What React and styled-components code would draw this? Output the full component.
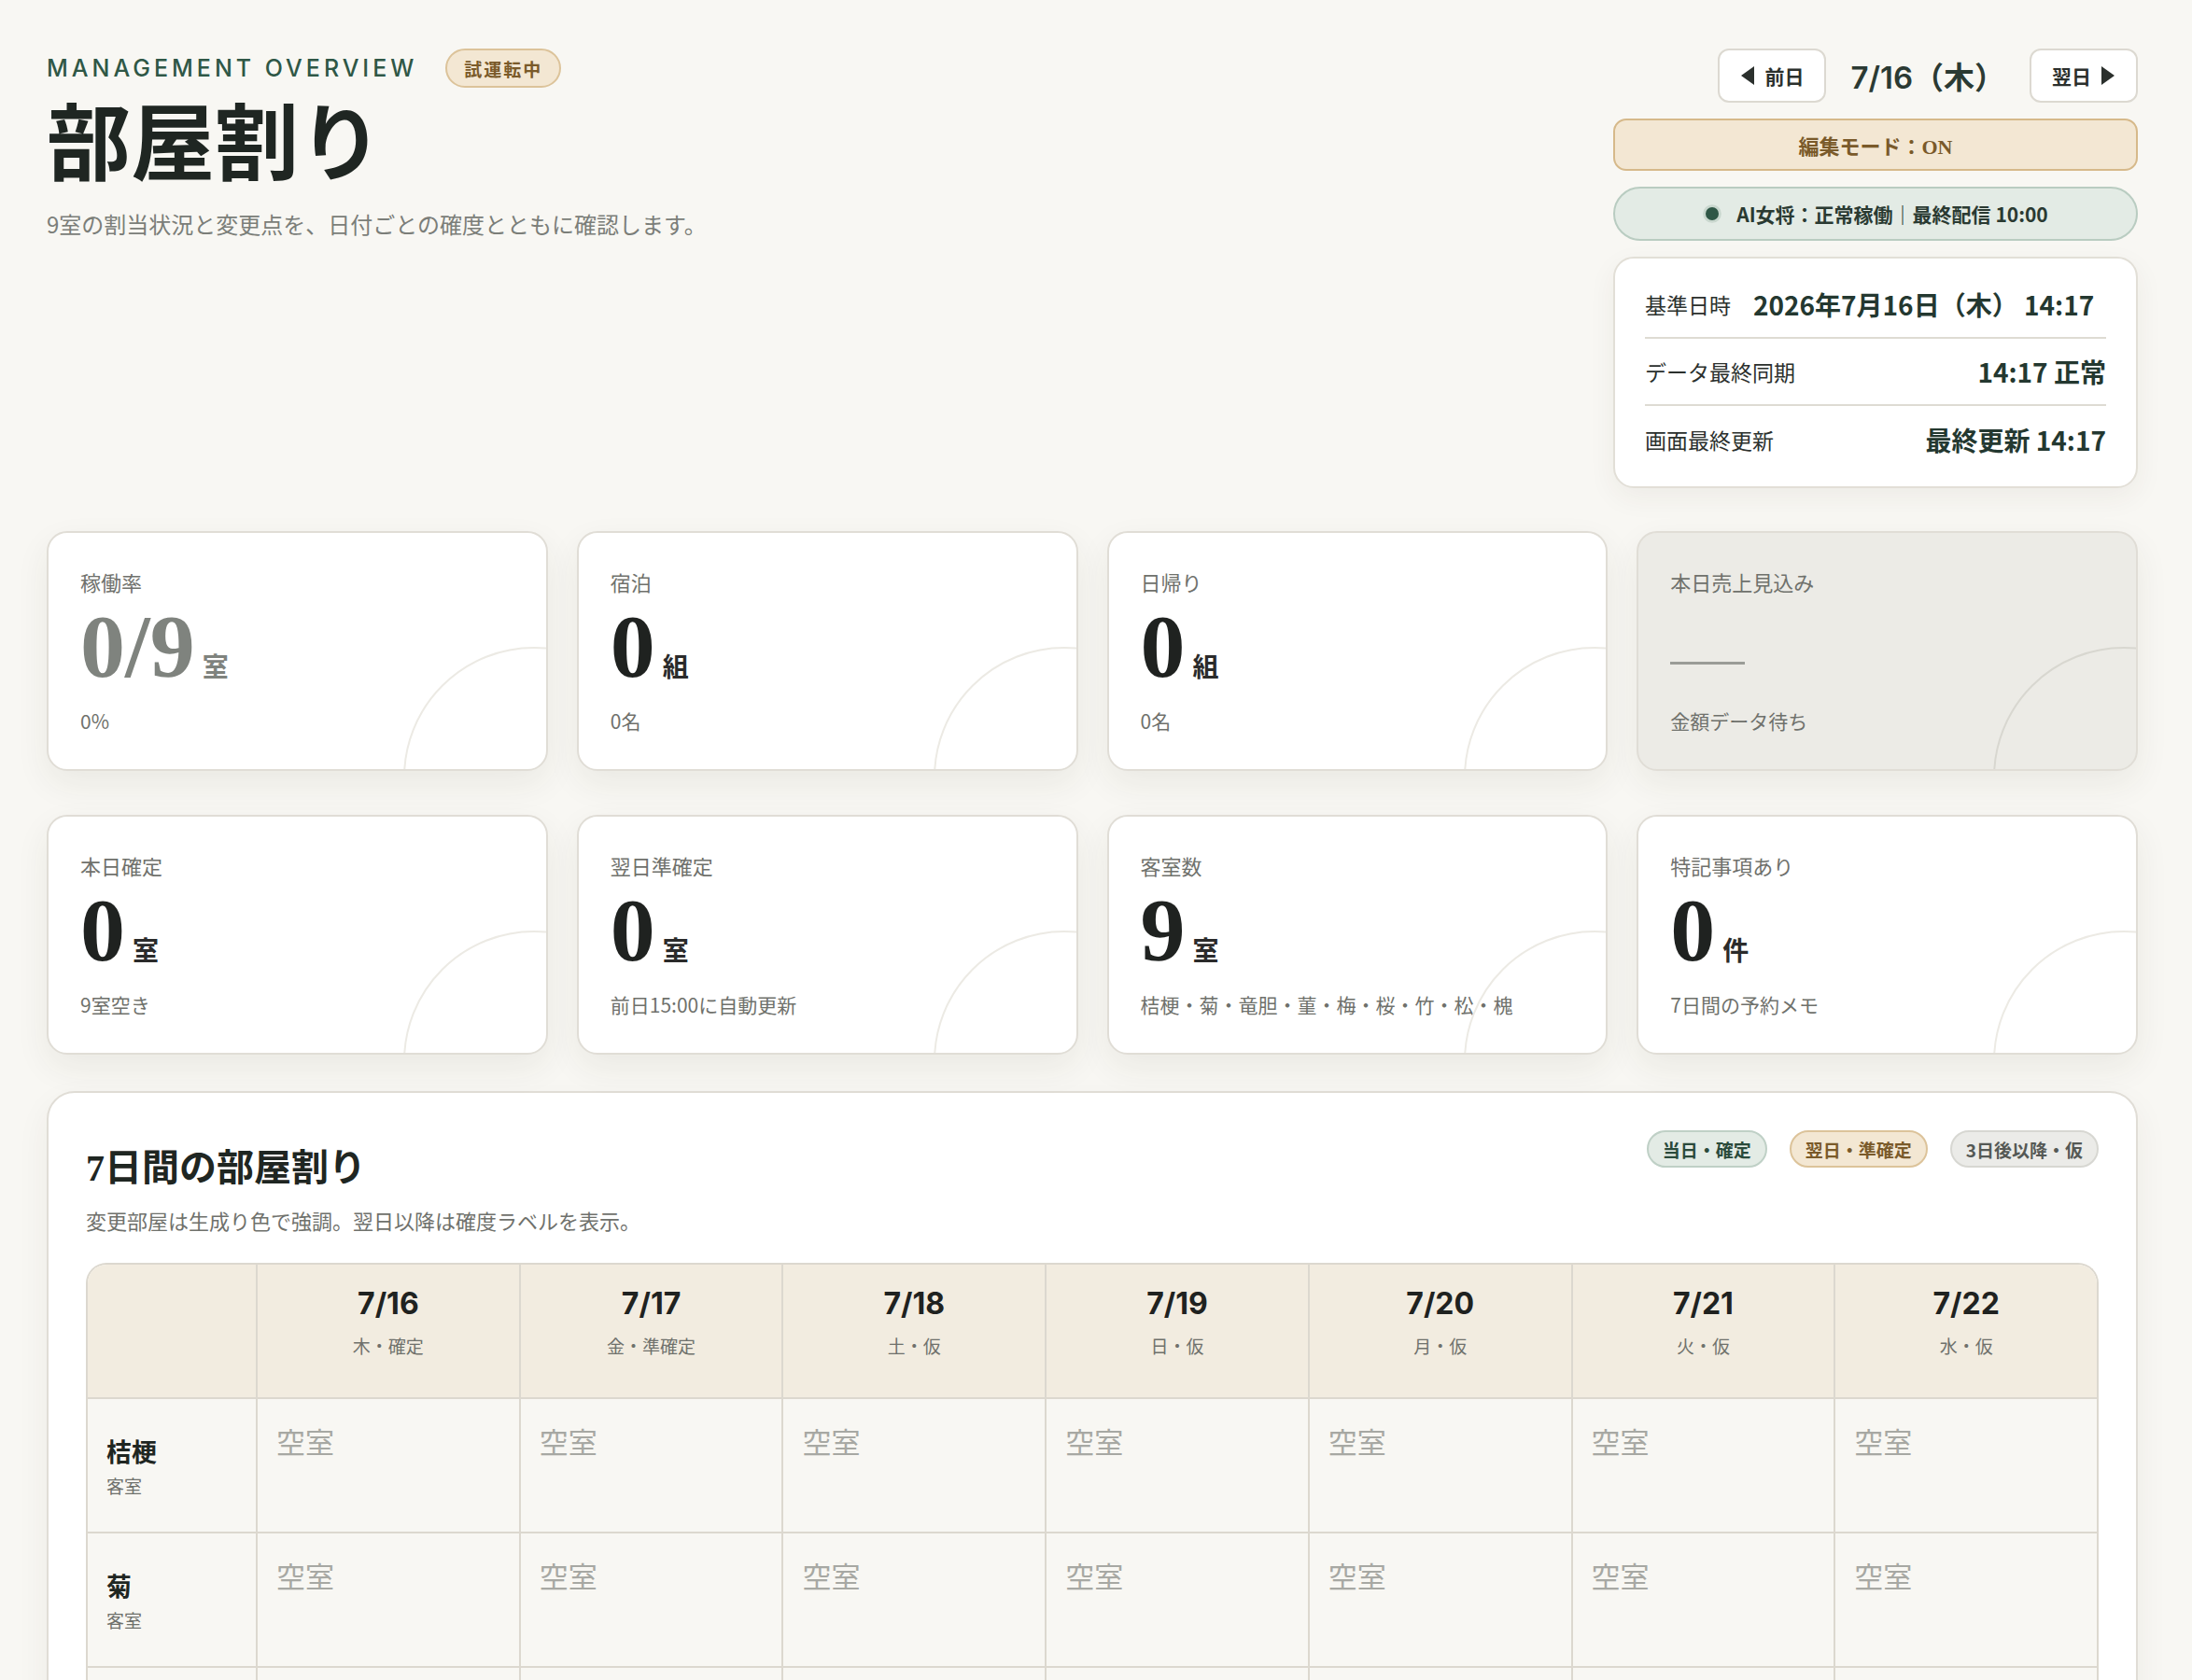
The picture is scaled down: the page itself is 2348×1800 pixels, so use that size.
import React from "react";
import styled, { createGlobalStyle } from "styled-components";

const Global = createGlobalStyle`
  html, body { margin: 0; padding: 0; background: #f8f7f3; }
  body { font-family: "Noto Sans CJK JP", "Noto Sans", sans-serif; color: #1f2622; }
  * { box-sizing: border-box; }
`;

const SERIF = `"Liberation Serif", "Noto Sans CJK JP", serif`;

const Page = styled.div`
  padding: 52px 58px 40px 50px;
  display: flex;
  flex-direction: column;
  gap: 39px;
`;
const Header = styled.header`
  display: flex;
  justify-content: space-between;
  align-items: flex-start;
  margin-bottom: 7px;
`;
const HeadLeft = styled.div`
  display: flex;
  flex-direction: column;
  padding-top: 0;
`;
const EyebrowRow = styled.div`
  display: flex;
  align-items: center;
  gap: 30px;
`;
const Eyebrow = styled.div`
  font-family: "Inter", "Noto Sans", sans-serif;
  font-size: 25px;
  letter-spacing: 4px;
  font-weight: 500;
  color: #2f5746;
`;
const Pill = styled.span`
  display: inline-flex;
  align-items: center;
  height: ${p => p.$h || 42}px;
  padding: 0 ${p => p.$px || 18}px;
  border-radius: 999px;
  font-size: ${p => p.$fs || 19}px;
  font-weight: 700;
  letter-spacing: ${p => p.$ls || 0}px;
  background: ${p => p.$bg};
  color: ${p => p.$fg};
  border: 2px solid ${p => p.$bd};
`;
const Title = styled.h1`
  margin: 10px 0 0 0;
  font-family: ${SERIF};
  font-size: 90px;
  font-weight: 700;
  line-height: 1.15;
  color: #1f2622;
`;
const Sub = styled.p`
  margin: 14px 0 0 0;
  font-size: 24px;
  color: #7b7e79;
`;
const HeadRight = styled.div`
  width: 562px;
  display: flex;
  flex-direction: column;
  gap: 17px;
`;
const DateNav = styled.div`
  display: flex;
  justify-content: flex-end;
  align-items: center;
  gap: 20px;
`;
const NavBtn = styled.button`
  height: 58px;
  width: 116px;
  padding: 0 18px;
  display: inline-flex;
  align-items: center;
  justify-content: center;
  gap: 10px;
  background: #fff;
  border: 2px solid #dcd9d1;
  border-radius: 12px;
  font-family: inherit;
  font-size: 21px;
  font-weight: 700;
  color: #2b302d;
`;
const DateText = styled.div`
  font-family: "Inter", "Noto Sans CJK JP", sans-serif;
  font-size: 33px;
  font-weight: 600;
  color: #2b3a33;
  padding: 0 6px;
`;
const ModeBar = styled.div`
  height: 56px;
  border-radius: 14px;
  background: #f3e7d3;
  border: 2px solid #d6b98a;
  display: flex;
  align-items: center;
  justify-content: center;
  font-family: ${SERIF};
  font-weight: 700;
  font-size: 22px;
  color: #7a5a2a;
`;
const AiBar = styled.div`
  height: 58px;
  border-radius: 999px;
  background: #e3ebe5;
  border: 2px solid #b9ccc1;
  display: flex;
  align-items: center;
  justify-content: center;
  gap: 10px;
  font-size: 21px;
  font-weight: 700;
  color: #2a3a32;
`;
const Dot = styled.span`
  width: 20px; height: 20px; border-radius: 50%;
  background: #2f5746;
  box-shadow: 0 0 0 4px #c9d7ce;
  margin-right: 6px;
  transform: scale(0.7);
`;
const InfoCard = styled.div`
  background: #fff;
  border: 2px solid #e2dfd7;
  border-radius: 22px;
  padding: 14px 32px;
  box-shadow: 0 10px 30px rgba(60,50,30,0.06);
`;
const InfoRow = styled.div`
  display: flex;
  justify-content: ${p => p.$between ? "space-between" : "flex-start"};
  align-items: center;
  gap: 24px;
  height: 72px;
  border-bottom: ${p => p.$last ? "none" : "2px solid #dedbd3"};
`;
const InfoLabel = styled.span`
  font-size: 23px;
  color: #2b302d;
`;
const InfoValue = styled.span`
  font-size: 28px;
  font-weight: 700;
  color: #243830;
`;

const KpiGrid = styled.div`
  display: grid;
  grid-template-columns: repeat(4, 1fr);
  gap: 47px 31px;
`;
const Kpi = styled.div`
  position: relative;
  overflow: hidden;
  height: 257px;
  border-radius: 22px;
  background: ${p => p.$muted ? "#ecebe6" : "#fff"};
  border: 2px solid #e0ddd6;
  box-shadow: 0 14px 36px rgba(60,50,30,0.07);
  padding: 36px 34px;
  display: flex;
  flex-direction: column;
`;
const Circle = styled.div`
  position: absolute;
  left: 380px;
  top: 122px;
  width: 280px;
  height: 280px;
  border-radius: 50%;
  border: 2px solid ${p => p.$muted ? "#d8d7d0" : "#eceae4"};
`;
const KpiLabel = styled.div`
  font-size: 22px;
  color: #6f716c;
`;
const KpiValueRow = styled.div`
  display: flex;
  align-items: baseline;
  gap: 8px;
  height: 100px;
  margin-top: 6px;
`;
const KpiNum = styled.span`
  font-family: ${SERIF};
  font-size: 96px;
  font-weight: 700;
  line-height: 1;
  color: ${p => p.$grey ? "#7f837e" : "#1f2220"};
`;
const KpiUnit = styled.span`
  font-family: ${SERIF};
  font-size: 28px;
  font-weight: 700;
  color: ${p => p.$grey ? "#7f837e" : "#2b2b2b"};
`;
const Dash = styled.span`
  display: block;
  width: 80px;
  height: 3px;
  background: #9a9c97;
  margin-top: 64px;
`;
const KpiSub = styled.div`
  margin-top: 12px;
  font-size: 21px;
  color: #6f716c;
`;

const Section = styled.section`
  background: #fff;
  border: 2px solid #e0ddd6;
  border-radius: 30px 30px 0 0;
  box-shadow: 0 14px 36px rgba(60,50,30,0.06);
  padding: 40px 40px 0 40px;
`;
const SectionHead = styled.div`
  display: flex;
  justify-content: space-between;
  align-items: flex-start;
`;
const SectionTitle = styled.h2`
  margin: 8px 0 0 0;
  font-family: ${SERIF};
  font-size: 40px;
  font-weight: 700;
`;
const SectionSub = styled.p`
  margin: 14px 0 30px 0;
  font-size: 22px;
  color: #6f716c;
`;
const Legend = styled.div`
  display: flex;
  gap: 24px;
`;
const Table = styled.div`
  display: grid;
  grid-template-columns: 180px repeat(7, 1fr);
  border: 2px solid #dcd8cf;
  border-bottom: none;
  border-radius: 22px 22px 0 0;
  overflow: hidden;
`;
const HeadCell = styled.div`
  height: 144px;
  background: #f2ece0;
  border-left: ${p => p.$first ? "none" : "2px solid #dcd8cf"};
  border-bottom: 2px solid #dcd8cf;
  display: flex;
  flex-direction: column;
  align-items: center;
  padding-top: 22px;
`;
const HeadDate = styled.div`
  font-family: "Inter", sans-serif;
  font-size: 32px;
  font-weight: 700;
  color: #1f2220;
`;
const HeadDay = styled.div`
  margin-top: 12px;
  font-size: 19px;
  color: #6f716c;
`;
const RoomCell = styled.div`
  height: 144px;
  background: #f8f7f3;
  border-bottom: 2px solid #dcd8cf;
  display: flex;
  flex-direction: column;
  justify-content: center;
  padding-left: 20px;
`;
const RoomName = styled.div`
  font-size: 27px;
  font-weight: 700;
`;
const RoomType = styled.div`
  font-size: 19px;
  color: #6f716c;
  margin-top: 4px;
`;
const Cell = styled.div`
  height: 144px;
  background: #f8f7f3;
  border-left: 2px solid #dcd8cf;
  border-bottom: 2px solid #dcd8cf;
  padding: 22px 20px;
  font-size: 31px;
  color: #a7a8a3;
`;

const kpis = [
  { label: "稼働率", num: "0/9", unit: "室", sub: "0%", grey: true },
  { label: "宿泊", num: "0", unit: "組", sub: "0名" },
  { label: "日帰り", num: "0", unit: "組", sub: "0名" },
  { label: "本日売上見込み", dash: true, sub: "金額データ待ち", muted: true },
  { label: "本日確定", num: "0", unit: "室", sub: "9室空き" },
  { label: "翌日準確定", num: "0", unit: "室", sub: "前日15:00に自動更新" },
  { label: "客室数", num: "9", unit: "室", sub: "桔梗・菊・竜胆・菫・梅・桜・竹・松・槐" },
  { label: "特記事項あり", num: "0", unit: "件", sub: "7日間の予約メモ" },
];
const days = [
  ["7/16", "木・確定"], ["7/17", "金・準確定"], ["7/18", "土・仮"], ["7/19", "日・仮"],
  ["7/20", "月・仮"], ["7/21", "火・仮"], ["7/22", "水・仮"],
];
const rooms = ["桔梗", "菊", "竜胆", "菫", "梅", "桜", "竹", "松", "槐"];

const Tri = ({ dir }) => (
  <svg width="16" height="22" viewBox="0 0 16 22">
    {dir === "l" ? <polygon points="15,1 15,21 1,11" fill="#2b302d" /> : <polygon points="1,1 1,21 15,11" fill="#2b302d" />}
  </svg>
);

export default function App() {
  return (
    <>
      <Global />
      <Page>
        <Header>
          <HeadLeft>
            <EyebrowRow>
              <Eyebrow>MANAGEMENT OVERVIEW</Eyebrow>
              <Pill $bg="#f3e7d3" $fg="#7a5a2a" $bd="#dcc39a" $ls={2}>試運転中</Pill>
            </EyebrowRow>
            <Title>部屋割り</Title>
            <Sub>9室の割当状況と変更点を、日付ごとの確度とともに確認します。</Sub>
          </HeadLeft>
          <HeadRight>
            <DateNav>
              <NavBtn><Tri dir="l" />前日</NavBtn>
              <DateText>7/16（木）</DateText>
              <NavBtn>翌日<Tri dir="r" /></NavBtn>
            </DateNav>
            <ModeBar>編集モード：ON</ModeBar>
            <AiBar><Dot />AI女将：正常稼働｜最終配信 10:00</AiBar>
            <InfoCard>
              <InfoRow><InfoLabel>基準日時</InfoLabel><InfoValue>2026年7月16日（木） 14:17</InfoValue></InfoRow>
              <InfoRow $between><InfoLabel>データ最終同期</InfoLabel><InfoValue>14:17 正常</InfoValue></InfoRow>
              <InfoRow $between $last><InfoLabel>画面最終更新</InfoLabel><InfoValue>最終更新 14:17</InfoValue></InfoRow>
            </InfoCard>
          </HeadRight>
        </Header>

        <KpiGrid>
          {kpis.map(k => (
            <Kpi key={k.label} $muted={k.muted}>
              <Circle $muted={k.muted} />
              <KpiLabel>{k.label}</KpiLabel>
              {k.dash ? <KpiValueRow><Dash /></KpiValueRow> : (
                <KpiValueRow>
                  <KpiNum $grey={k.grey}>{k.num}</KpiNum>
                  <KpiUnit $grey={k.grey}>{k.unit}</KpiUnit>
                </KpiValueRow>
              )}
              <KpiSub>{k.sub}</KpiSub>
            </Kpi>
          ))}
        </KpiGrid>

        <Section>
          <SectionHead>
            <div>
              <SectionTitle>7日間の部屋割り</SectionTitle>
              <SectionSub>変更部屋は生成り色で強調。翌日以降は確度ラベルを表示。</SectionSub>
            </div>
            <Legend>
              <Pill $h={40} $fs={19} $px={15} $bg="#e3ebe5" $fg="#2a4a3b" $bd="#bfd0c6">当日・確定</Pill>
              <Pill $h={40} $fs={19} $px={15} $bg="#f3e7d3" $fg="#7a5a2a" $bd="#dcc39a">翌日・準確定</Pill>
              <Pill $h={40} $fs={19} $px={15} $bg="#ebebe8" $fg="#555955" $bd="#d7d7d2">3日後以降・仮</Pill>
            </Legend>
          </SectionHead>
          <Table>
            <HeadCell $first />
            {days.map(([d, s]) => (
              <HeadCell key={d}><HeadDate>{d}</HeadDate><HeadDay>{s}</HeadDay></HeadCell>
            ))}
            {rooms.map(r => (
              <React.Fragment key={r}>
                <RoomCell><RoomName>{r}</RoomName><RoomType>客室</RoomType></RoomCell>
                {days.map(([d]) => <Cell key={d}>空室</Cell>)}
              </React.Fragment>
            ))}
          </Table>
        </Section>
      </Page>
    </>
  );
}
